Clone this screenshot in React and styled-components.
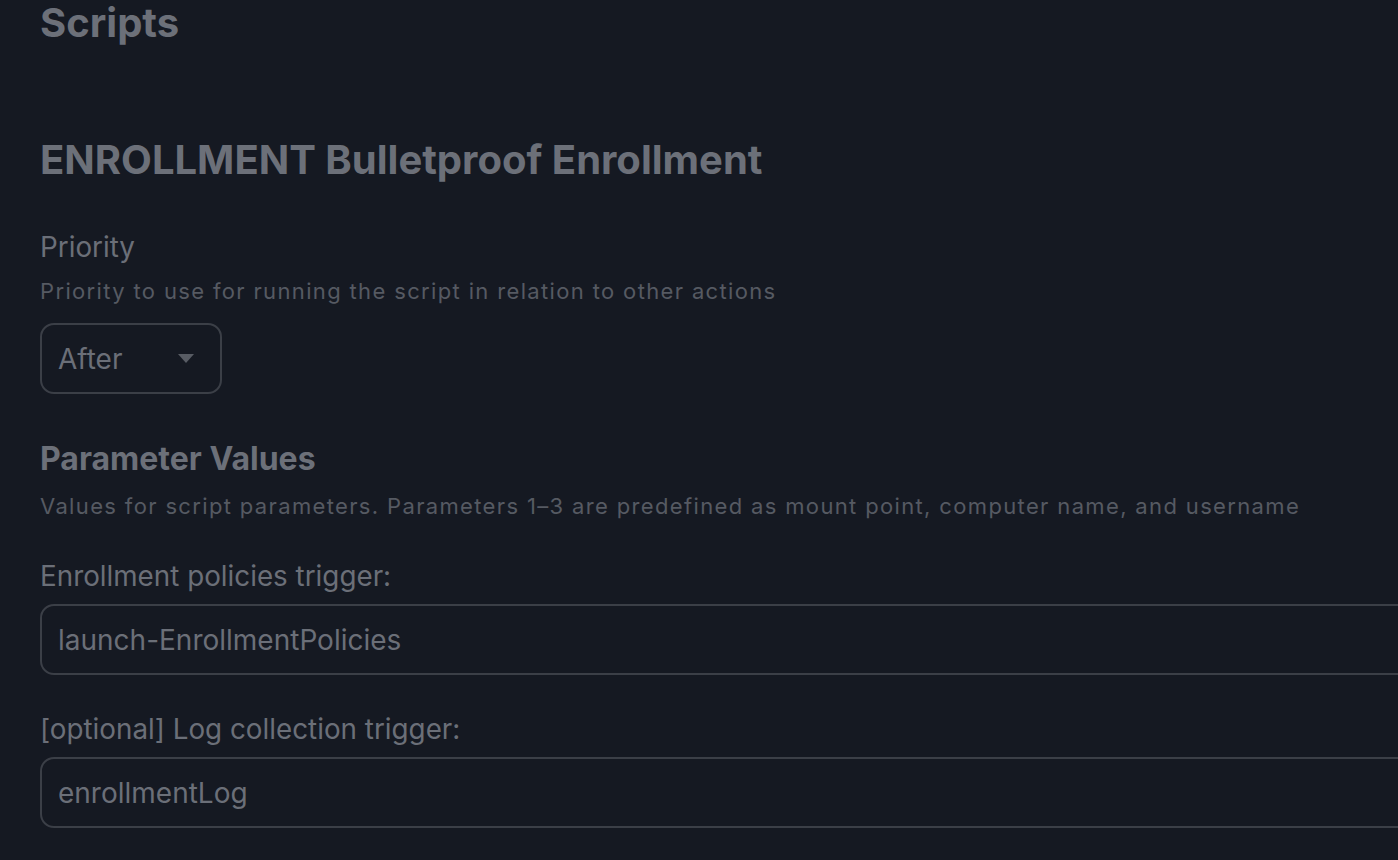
import React from 'react';
import styled, { createGlobalStyle } from 'styled-components';

const GlobalStyle = createGlobalStyle`
  html, body {
    margin: 0;
    padding: 0;
    background: #151922;
    overflow: hidden;
  }
  body {
    font-family: Inter, "Noto Sans", sans-serif;
  }
`;

const Page = styled.div`
  width: 1500px;
  height: 860px;
  padding: 0 0 0 40px;
  box-sizing: border-box;
  background: #151922;
  color: #6b6f78;
`;

const PageTitle = styled.h1`
  margin: 0;
  padding-top: 2px;
  font-size: 40px;
  line-height: 42px;
  font-weight: 700;
  color: #6c7079;
`;

const ScriptTitle = styled.h2`
  margin: 92px 0 0;
  font-size: 40px;
  line-height: 48px;
  font-weight: 700;
  color: #6c7079;
`;

const Field = styled.div`
  display: flex;
  flex-direction: column;
  align-items: flex-start;
  margin-top: ${p => p.$top || 0}px;
`;

const Label = styled.label`
  font-size: 27.8px;
  line-height: 34px;
  color: #6b6f78;
`;

const Hint = styled.p`
  margin: 12px 0 0;
  font-size: 22px;
  line-height: 30px;
  letter-spacing: 1.35px;
  color: #565a62;
`;

const SectionTitle = styled.h3`
  margin: 0;
  font-size: 32px;
  line-height: 40px;
  font-weight: 700;
  color: #6c7079;
`;

const SelectBox = styled.div`
  margin-top: 17px;
  width: 182px;
  height: 71px;
  box-sizing: border-box;
  border: 2px solid #3b3f47;
  border-radius: 14px;
  display: flex;
  align-items: center;
  justify-content: space-between;
  padding: 0 26px 0 16px;
  font-size: 28px;
  color: #6b6f78;
`;

const Caret = styled.span`
  width: 0;
  height: 0;
  border-left: 8px solid transparent;
  border-right: 8px solid transparent;
  border-top: 9px solid #585c64;
`;

const TextBox = styled.div`
  margin-top: 11px;
  width: 100%;
  height: 71px;
  box-sizing: border-box;
  border: 2px solid #3b3f47;
  border-radius: 14px;
  display: flex;
  align-items: center;
  padding: 0 16px;
  font-size: 28px;
  color: #6b6f78;
`;

export default function App() {
  return (
    <>
      <GlobalStyle />
      <Page>
        <PageTitle>Scripts</PageTitle>
        <ScriptTitle>ENROLLMENT Bulletproof Enrollment</ScriptTitle>

        <Field $top={46}>
          <Label>Priority</Label>
          <Hint>Priority to use for running the script in relation to other actions</Hint>
          <SelectBox>
            <span>After</span>
            <Caret />
          </SelectBox>
        </Field>

        <Field $top={45}>
          <SectionTitle>Parameter Values</SectionTitle>
          <Hint>Values for script parameters. Parameters 1–3 are predefined as mount point, computer name, and username</Hint>
        </Field>

        <Field $top={38}>
          <Label>Enrollment policies trigger:</Label>
          <TextBox>launch-EnrollmentPolicies</TextBox>
        </Field>

        <Field $top={37}>
          <Label>[optional] Log collection trigger:</Label>
          <TextBox>enrollmentLog</TextBox>
        </Field>
      </Page>
    </>
  );
}
